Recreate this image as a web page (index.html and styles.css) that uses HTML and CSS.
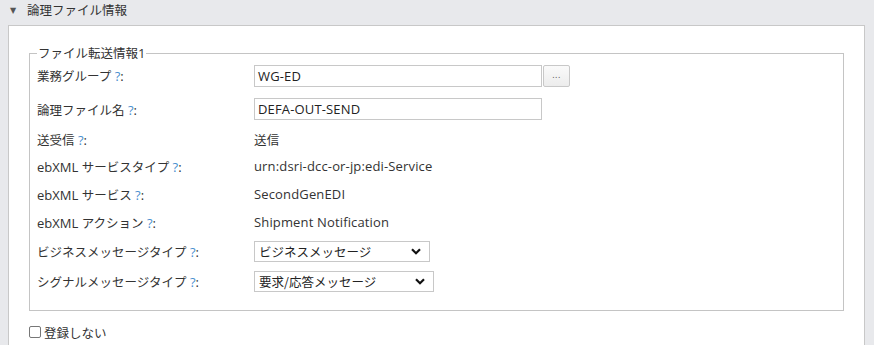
FILE: index.html
```html
<!DOCTYPE html>
<html lang="ja">
<head>
<meta charset="utf-8">
<link rel="stylesheet" href="styles.css">
</head>
<body>
<div class="header">
  <span class="tri">▼</span>
  <span class="title ja">論理ファイル情報</span>
</div>
<div class="panel">
  <fieldset class="box">
    <legend class="legend"><span class="ja">ファイル転送情報</span>1</legend>
    <div class="row r-input">
      <div class="label"><span class="ja">業務グループ</span> <span class="q">?</span>:</div>
      <div class="value">
        <div class="input w288">WG-ED</div>
        <div class="btn">...</div>
      </div>
    </div>
    <div class="row r-input">
      <div class="label"><span class="ja">論理ファイル名</span> <span class="q">?</span>:</div>
      <div class="value"><div class="input w288">DEFA-OUT-SEND</div></div>
    </div>
    <div class="row r-text1">
      <div class="label"><span class="ja">送受信</span> <span class="q">?</span>:</div>
      <div class="value"><span class="ja">送信</span></div>
    </div>
    <div class="row r-text">
      <div class="label">ebXML <span class="ja">サービスタイプ</span> <span class="q">?</span>:</div>
      <div class="value">urn:dsri-dcc-or-jp:edi-Service</div>
    </div>
    <div class="row r-text">
      <div class="label">ebXML <span class="ja">サービス</span> <span class="q">?</span>:</div>
      <div class="value">SecondGenEDI</div>
    </div>
    <div class="row r-text">
      <div class="label">ebXML <span class="ja">アクション</span> <span class="q">?</span>:</div>
      <div class="value">Shipment Notification</div>
    </div>
    <div class="row r-select">
      <div class="label"><span class="ja">ビジネスメッセージタイプ</span> <span class="q">?</span>:</div>
      <div class="value">
        <div class="select s1"><span class="ja">ビジネスメッセージ</span>
          <svg class="chev" width="10" height="7" viewBox="0 0 10 7"><path d="M1 1.2 L5 5.2 L9 1.2" fill="none" stroke="#111" stroke-width="2.2"/></svg>
        </div>
      </div>
    </div>
    <div class="row r-select">
      <div class="label"><span class="ja">シグナルメッセージタイプ</span> <span class="q">?</span>:</div>
      <div class="value">
        <div class="select s2"><span class="ja">要求/応答メッセージ</span>
          <svg class="chev" width="10" height="7" viewBox="0 0 10 7"><path d="M1 1.2 L5 5.2 L9 1.2" fill="none" stroke="#111" stroke-width="2.2"/></svg>
        </div>
      </div>
    </div>
  </fieldset>
  <div class="check-row">
    <span class="check"></span>
    <span class="check-label ja">登録しない</span>
  </div>
</div>
</body>
</html>
```

FILE: styles.css
```css
html, body {
  margin: 0;
  padding: 0;
}
body {
  background: #e8e9ec;
  font-family: "Open Sans", "Noto Sans CJK JP", sans-serif;
  font-size: 13px;
  color: #333;
  height: 345px;
  overflow: hidden;
}
.ja {
  font-family: "Noto Sans CJK JP", sans-serif;
  font-size: 12.5px;
}
.header {
  height: 25px;
  display: flex;
  align-items: center;
  padding-left: 10px;
  box-sizing: border-box;
}
.tri {
  font-size: 8px;
  color: #555;
  width: 17px;
  line-height: 1;
  position: relative;
  top: -2px;
  font-family: "DejaVu Sans", sans-serif;
}
.title {
  color: #333;
  line-height: 1;
  position: relative;
  top: -2px;
}
.panel {
  margin-left: 8px;
  width: 857px;
  box-sizing: border-box;
  background: #fff;
  border: 1px solid #c8c8c8;
  border-bottom: none;
  padding: 21px 20px 0 20px;
  height: 320px;
}
.box {
  margin: 0;
  border: 1px solid #c4c4c4;
  padding: 0 7px 14px 7px;
  min-width: 0;
}
.legend {
  padding: 0 1px;
  margin-left: 0;
  line-height: 12px;
  color: #333;
}
.row {
  display: flex;
  align-items: center;
}
.r-input { height: 33px; }
.r-input + .r-input { height: 34px; }
.r-text1 { height: 26px; }
.r-text { height: 28px; }
.r-select { height: 30px; }
.label {
  width: 217px;
  flex: none;
  white-space: nowrap;
}
.q {
  color: #4a90d0;
}
.value {
  display: flex;
  align-items: center;
  letter-spacing: 0.15px;
}
.input {
  height: 22px;
  box-sizing: border-box;
  border: 1px solid #c8c8c8;
  padding: 0 3px;
  display: flex;
  align-items: center;
  color: #222;
}
.w288 { width: 288px; }
.btn {
  margin-left: 1px;
  width: 27px;
  height: 22px;
  box-sizing: border-box;
  border: 1px solid #c8c8c8;
  border-radius: 2px;
  background: linear-gradient(#fafafa, #ececec);
  display: flex;
  align-items: center;
  justify-content: center;
  font-size: 9px;
  color: #555;
  letter-spacing: 0.5px;
  padding-bottom: 3px;
}
.select {
  height: 21px;
  box-sizing: border-box;
  border: 1px solid #c8c8c8;
  display: flex;
  align-items: center;
  justify-content: space-between;
  padding: 0 8px 0 4px;
  color: #222;
  background: #fff;
  letter-spacing: 0;
}
.s1 { width: 176px; }
.s2 { width: 180px; }
.chev { flex: none; }
.check-row {
  display: flex;
  align-items: center;
  margin-top: 14px;
  height: 14px;
}
.check {
  width: 10px;
  height: 10px;
  border: 1px solid #777;
  border-radius: 2px;
  background: #fff;
  margin-right: 3px;
  flex: none;
}
```
